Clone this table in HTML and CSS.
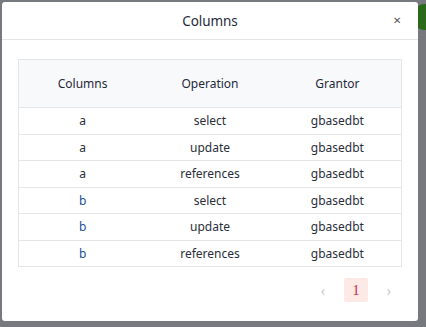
FILE: index.html
```html
<!DOCTYPE html>
<html>
<head>
<meta charset="utf-8">
<link rel="stylesheet" href="styles.css">
</head>
<body>
<div class="bg-dot"></div>
<div class="modal">
  <div class="modal-header">
    <span class="title">Columns</span>
    <span class="close">&#x2715;</span>
  </div>
  <div class="modal-body">
    <table class="grid">
      <thead>
        <tr><th>Columns</th><th>Operation</th><th>Grantor</th></tr>
      </thead>
      <tbody>
        <tr><td>a</td><td>select</td><td>gbasedbt</td></tr>
        <tr><td>a</td><td>update</td><td>gbasedbt</td></tr>
        <tr><td>a</td><td>references</td><td>gbasedbt</td></tr>
        <tr><td class="blue">b</td><td>select</td><td>gbasedbt</td></tr>
        <tr><td class="blue">b</td><td>update</td><td>gbasedbt</td></tr>
        <tr><td class="blue">b</td><td>references</td><td>gbasedbt</td></tr>
      </tbody>
    </table>
    <div class="pager">
      <span class="arrow">&#x2039;</span>
      <span class="page">1</span>
      <span class="arrow">&#x203A;</span>
    </div>
  </div>
</div>
</body>
</html>
```
FILE: styles.css
```css
html, body {
  margin: 0;
  padding: 0;
}
body {
  width: 426px;
  height: 327px;
  background: #76797d;
  padding: 2px;
  box-sizing: border-box;
  font-family: "Noto Sans", "Open Sans", sans-serif;
  color: #1f2a3a;
  position: relative;
  overflow: hidden;
}
.bg-dot {
  position: absolute;
  left: 412px;
  top: 4px;
  width: 26px;
  height: 26px;
  border-radius: 50%;
  background: #2c6a1b;
}
.modal {
  position: relative;
  width: 416px;
  height: 319px;
  background: #fff;
  border-radius: 3px;
  display: flex;
  flex-direction: column;
}
.modal-header {
  height: 37px;
  border-bottom: 1px solid #e4e6ea;
  display: flex;
  align-items: center;
  justify-content: center;
  position: relative;
}
.title {
  font-size: 13.5px;
  color: #1f2a3a;
  letter-spacing: -0.1px;
}
.close {
  position: absolute;
  right: 17px;
  top: 11px;
  font-size: 10px;
  color: #555;
}
.modal-body {
  padding: 19px 16px 0;
}
.grid {
  width: 384px;
  border-collapse: collapse;
  table-layout: fixed;
  font-size: 12px;
  border: 1px solid #e4e6ea;
}
.grid th {
  height: 47px;
  background: #f8f9fb;
  font-weight: normal;
  font-size: 12px;
  color: #1f2a3a;
  border-bottom: 1px solid #e4e6ea;
  padding: 0;
}
.grid td {
  height: 25.5px;
  text-align: center;
  padding: 0;
  border-bottom: 1px solid #e4e6ea;
  color: #2a2f3a;
}
.grid td.blue {
  color: #1b4f91;
}
.pager {
  display: flex;
  justify-content: flex-end;
  align-items: center;
  gap: 16px;
  margin-top: 11px;
  padding-right: 8px;
}
.arrow {
  color: #c8cbd2;
  font-size: 14px;
  width: 10px;
  text-align: center;
}
.page {
  width: 24px;
  height: 24px;
  background: #fde9e6;
  border-radius: 2px;
  color: #c0304a;
  font-family: "Liberation Serif", serif;
  font-size: 15px;
  display: flex;
  align-items: center;
  justify-content: center;
}
```
